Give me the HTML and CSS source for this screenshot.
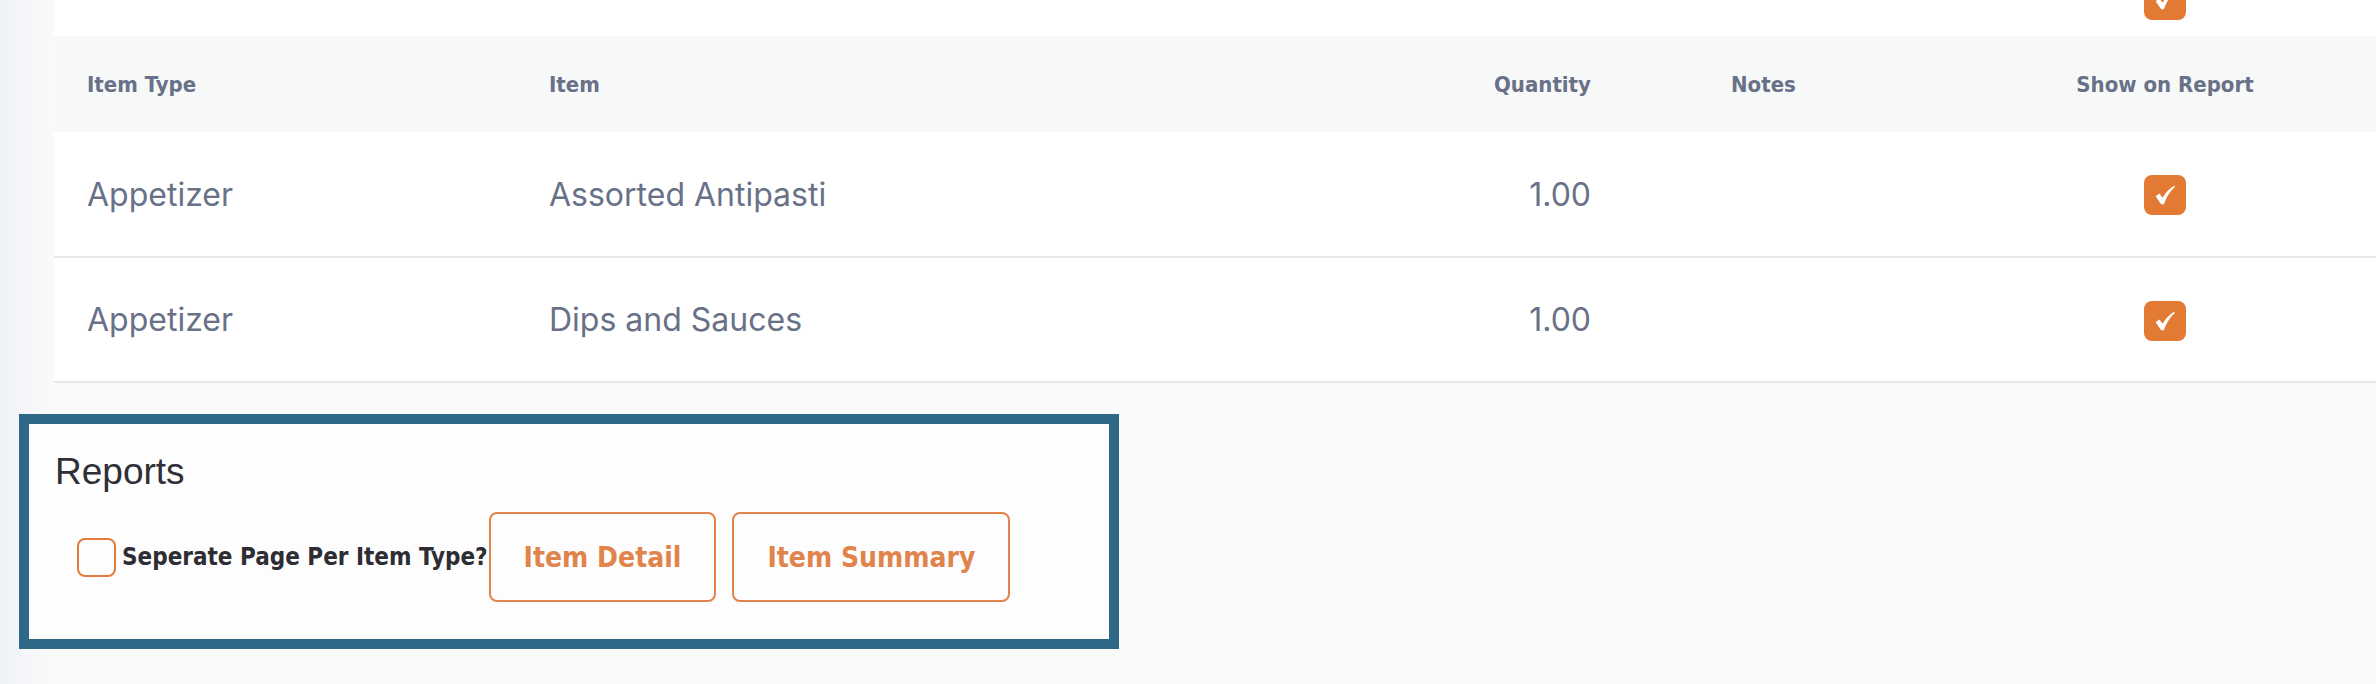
FILE: index.html
```html
<!DOCTYPE html>
<html lang="en">
<head>
<meta charset="utf-8">
<title>Items</title>
<link rel="stylesheet" href="styles.css">
</head>
<body>
<div class="page">
  <section class="items">
    <div class="prev-row">
      <span class="tick">
        <svg viewBox="0 0 20 20" width="20" height="20"><path d="M0.6 11.2 L4.4 8.4 L7.6 12.8 Q12 5.2 19.4 0.6 L19.6 2.2 Q13.2 7.4 8.8 19.2 L6.2 19.2 Z" fill="#fff"/></svg>
      </span>
    </div>
    <table class="items-table">
      <colgroup>
        <col class="c-type"><col class="c-item"><col class="c-qty"><col class="c-notes"><col class="c-show">
      </colgroup>
      <thead>
        <tr>
          <th class="left">Item Type</th>
          <th class="left">Item</th>
          <th class="qty">Quantity</th>
          <th class="left">Notes</th>
          <th class="center">Show on Report</th>
        </tr>
      </thead>
      <tbody>
        <tr>
          <td>Appetizer</td>
          <td>Assorted Antipasti</td>
          <td class="qty">1.00</td>
          <td></td>
          <td class="center"><span class="tick"><svg viewBox="0 0 20 20" width="20" height="20"><path d="M0.6 11.2 L4.4 8.4 L7.6 12.8 Q12 5.2 19.4 0.6 L19.6 2.2 Q13.2 7.4 8.8 19.2 L6.2 19.2 Z" fill="#fff"/></svg></span></td>
        </tr>
        <tr>
          <td>Appetizer</td>
          <td>Dips and Sauces</td>
          <td class="qty">1.00</td>
          <td></td>
          <td class="center"><span class="tick"><svg viewBox="0 0 20 20" width="20" height="20"><path d="M0.6 11.2 L4.4 8.4 L7.6 12.8 Q12 5.2 19.4 0.6 L19.6 2.2 Q13.2 7.4 8.8 19.2 L6.2 19.2 Z" fill="#fff"/></svg></span></td>
        </tr>
      </tbody>
    </table>
  </section>

  <section class="reports">
    <h2 class="reports-title">Reports</h2>
    <div class="report-row">
      <span class="box-check"></span>
      <span class="check-label">Seperate Page Per Item Type?</span>
      <button class="btn">Item Detail</button>
      <button class="btn btn-gap">Item Summary</button>
    </div>
  </section>
</div>
</body>
</html>
```

FILE: styles.css
```css
html, body {
  margin: 0;
  padding: 0;
}

body {
  width: 2376px;
  height: 684px;
  overflow: hidden;
  background: linear-gradient(to right, #eef1f5 0, #f6f7f9 30px, #fafafa 54px, #fafafa 100%);
  font-family: Inter, "Liberation Sans", sans-serif;
}

.page {
  display: flex;
  flex-direction: column;
}

.items {
  margin-left: 54px;
  width: 2322px;
}

.prev-row {
  height: 36px;
  background: #ffffff;
  overflow: hidden;
  display: flex;
  justify-content: flex-end;
  align-items: flex-end;
  padding-right: 190px;
  box-sizing: border-box;
}

.prev-row .tick {
  margin-bottom: 16px;
}

.tick {
  display: inline-flex;
  align-items: center;
  justify-content: center;
  width: 42px;
  height: 40px;
  border-radius: 8px;
  background: #e27a33;
  vertical-align: middle;
  flex: none;
}

.items-table {
  width: 2322px;
  border-collapse: collapse;
  table-layout: fixed;
  color: #687187;
}

.c-type { width: 462px; }
.c-item { width: 784px; }
.c-qty { width: 398px; }
.c-notes { width: 256px; }
.c-show { width: 422px; }

.items-table thead tr {
  background: #f7f8f8;
  height: 96px;
}

.items-table th {
  font-family: "DejaVu Sans Condensed", "DejaVu Sans", sans-serif;
  font-stretch: semi-condensed;
  font-weight: bold;
  font-size: 22px;
  padding: 0 0 0 33px;
  vertical-align: middle;
}

.items-table tbody tr {
  background: #ffffff;
  height: 125px;
  border-bottom: 2px solid #e7e7e7;
}

.items-table td {
  font-size: 32px;
  padding: 0 0 0 33px;
  vertical-align: middle;
}

.left { text-align: left; }

.items-table .qty {
  text-align: right;
  padding-left: 0;
  padding-right: 107px;
}

.items-table .center {
  text-align: center;
  padding-left: 0;
}

.reports {
  margin-left: 19px;
  margin-top: 31px;
  width: 1100px;
  height: 235px;
  box-sizing: border-box;
  border: 10px solid #2e6a88;
  background: #fdfdfd;
  padding: 27px 26px 0 26px;
}

.reports-title {
  margin: 0 0 19px 0;
  font-family: "Liberation Sans", Arial, sans-serif;
  font-weight: normal;
  font-size: 37px;
  line-height: 42px;
  color: #2f2f35;
}

.report-row {
  display: flex;
  align-items: center;
  height: 90px;
}

.box-check {
  width: 39px;
  height: 39px;
  box-sizing: border-box;
  border: 2px solid #e07d3c;
  border-radius: 8px;
  margin-left: 22px;
  margin-right: 6px;
  flex: none;
}

.check-label {
  font-family: "DejaVu Sans Condensed", "DejaVu Sans", sans-serif;
  font-stretch: semi-condensed;
  font-weight: bold;
  font-size: 24px;
  color: #2d2d33;
  white-space: nowrap;
}

.btn {
  height: 90px;
  padding: 0 33px;
  margin-left: 1px;
  border: 2px solid #e0844c;
  border-radius: 8px;
  background: transparent;
  color: #e0844c;
  font-family: "DejaVu Sans Condensed", "DejaVu Sans", sans-serif;
  font-stretch: semi-condensed;
  font-weight: bold;
  font-size: 28px;
  white-space: nowrap;
  cursor: pointer;
}

.btn-gap {
  margin-left: 16px;
}
```
